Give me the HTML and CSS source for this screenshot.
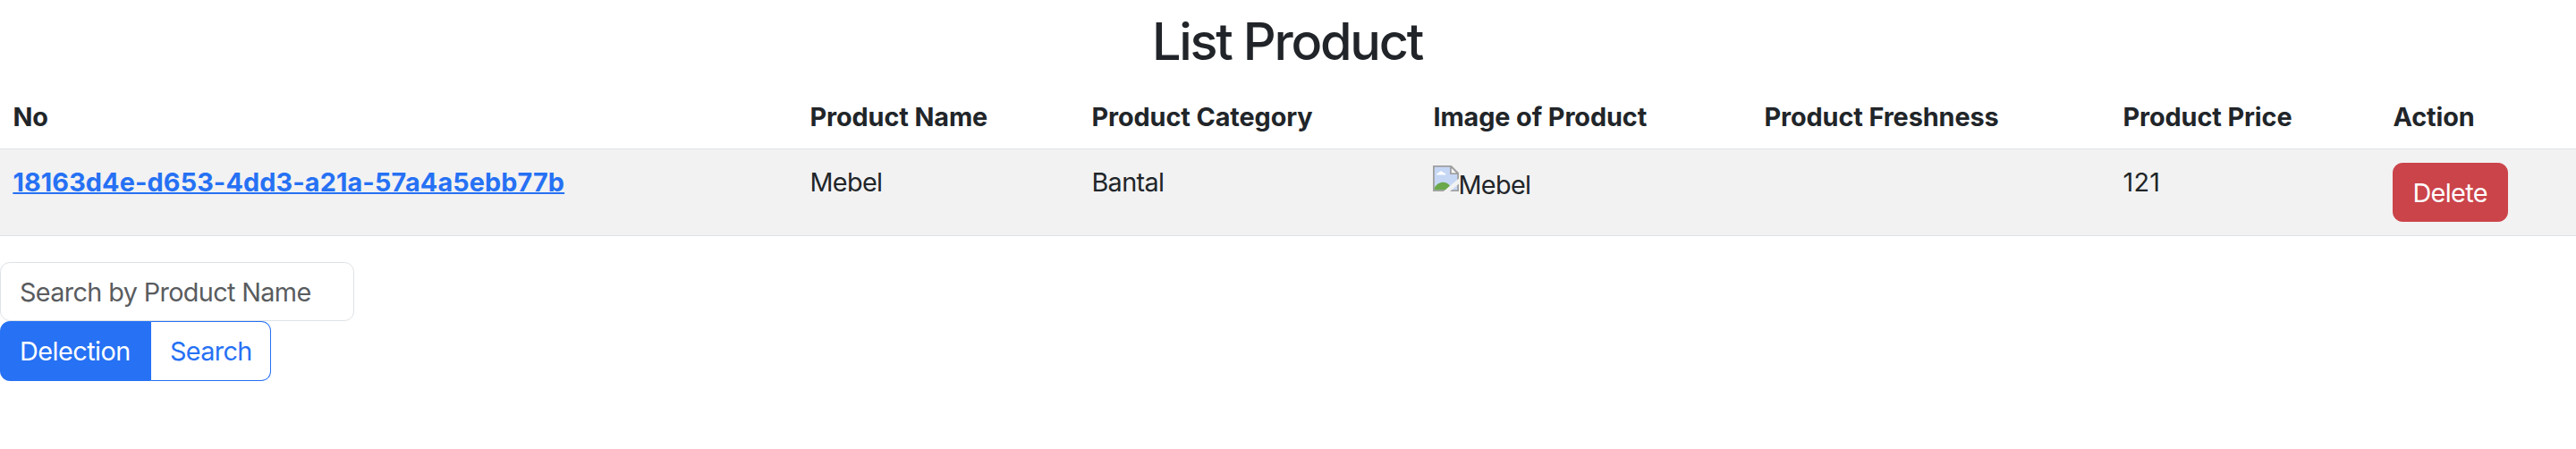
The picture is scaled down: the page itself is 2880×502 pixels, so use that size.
FILE: index.html
```html
<!DOCTYPE html>
<html lang="en">
<head>
<meta charset="utf-8">
<title>List Product</title>
<link rel="stylesheet" href="styles.css">
</head>
<body>
<h2 class="title"><span>List Product</span></h2>
<table class="table">
<colgroup><col class="c-no"><col class="c-name"><col class="c-cat"><col class="c-img"><col class="c-fresh"><col class="c-price"><col class="c-action"></colgroup>
<thead>
<tr><th>No</th><th>Product Name</th><th>Product Category</th><th>Image of Product</th><th>Product Freshness</th><th>Product Price</th><th>Action</th></tr>
</thead>
<tbody>
<tr>
<th><a class="link" href="#">18163d4e-d653-4dd3-a21a-57a4a5ebb77b</a></th>
<td>Mebel</td>
<td>Bantal</td>
<td><span class="picture"><svg class="broken" viewBox="0 0 16 16" aria-hidden="true"><path d="M.5.5h10.700l4.300 4.300v10.700H.5z" fill="#c6d7f5" stroke="#a0a0a0"/><path d="M2.300 5.800c0-.9.7-1.300 1.400-1.200C4 3.200 6 3.200 6.400 4.500c1-.1 1.600.4 1.600 1.300z" fill="#fff"/><path d="M1 15v-1.200c2-3.900 7-4.600 9.500-1.300L8 15z" fill="#6aa84a"/><path d="M11 .5v4.500h4.500z" fill="#fff" stroke="#a0a0a0"/><path d="M6.500 16 16 8v3.300L10.500 16z" fill="#f2f2f2"/></svg><span class="alt">Mebel</span></span></td>
<td></td>
<td class="price">121</td>
<td><button class="btn btn-danger" type="button">Delete</button></td>
</tr>
</tbody>
</table>
<form class="search">
<input class="field" type="text" placeholder="Search by Product Name">
<div class="group"><button class="btn btn-primary" type="button">Delection</button><button class="btn btn-outline" type="button">Search</button></div>
</form>
</body>
</html>
```
FILE: styles.css
```css
*, *::before, *::after { box-sizing: border-box; }
body {
  margin: 0;
  background: #fff;
  color: #212529;
  font-family: Inter, "Liberation Sans", sans-serif;
  font-size: 28.8px;
  line-height: 43.2px;
  letter-spacing: -0.022em;
}
.title {
  margin: 0;
  padding: 12px 2px 14px 0;
  font-size: 57.6px;
  font-weight: 500;
  line-height: 69px;
  text-align: center;
  letter-spacing: -0.039em;
}
.table {
  width: 100%;
  table-layout: fixed;
  border-collapse: collapse;
  margin: 0 0 29px;
}
.c-no { width: 891px; }
.c-name { width: 315px; }
.c-cat { width: 382px; }
.c-img { width: 370px; }
.c-fresh { width: 401px; }
.c-price { width: 302px; }
.table th, .table td {
  padding: 14px 14.4px;
  text-align: left;
  vertical-align: top;
  border-bottom: 1px solid #dee2e6;
}
.table th { font-weight: 700; letter-spacing: -0.003em; }
.table tbody tr { background: #f2f2f2; height: 97px; }
.table tbody th, .table tbody td { padding-top: 15px; padding-bottom: 13px; }
.table .price { letter-spacing: 0.01em; }
.link {
  color: #2671f4;
  text-decoration: underline;
  text-decoration-thickness: 2px;
  letter-spacing: 0.004em;
}
.picture { display: flex; align-items: flex-start; padding-top: 3px; }
.broken { width: 29px; height: 29px; flex: none; }
.alt { margin-left: -1px; }
.btn {
  height: 67px;
  padding: 0 21px;
  border: 1px solid;
  border-radius: 10.8px;
  font: inherit;
  letter-spacing: inherit;
  text-align: left;
  display: inline-block;
  vertical-align: top;
}
.btn-danger { width: 129px; height: 66px; color: #fff; background: #cb444a; border-color: #cb444a; }
.btn-primary { width: 169px; color: #fff; background: #2671f4; border-color: #2671f4; border-radius: 10.8px 0 0 10.8px; letter-spacing: -0.018em; }
.btn-outline { width: 134px; color: #2671f4; background: #fff; border-color: #2671f4; border-left: 0; border-radius: 0 10.8px 10.8px 0; }
.search { display: flex; flex-direction: column; align-items: flex-start; }
.field {
  width: 396px;
  height: 66px;
  padding: 0 21px;
  border: 1px solid #dee2e6;
  border-radius: 10.8px;
  background: #fff;
  font: inherit;
  letter-spacing: inherit;
}
.field::placeholder { color: #595c5f; opacity: 1; }
.group { display: flex; }
```
